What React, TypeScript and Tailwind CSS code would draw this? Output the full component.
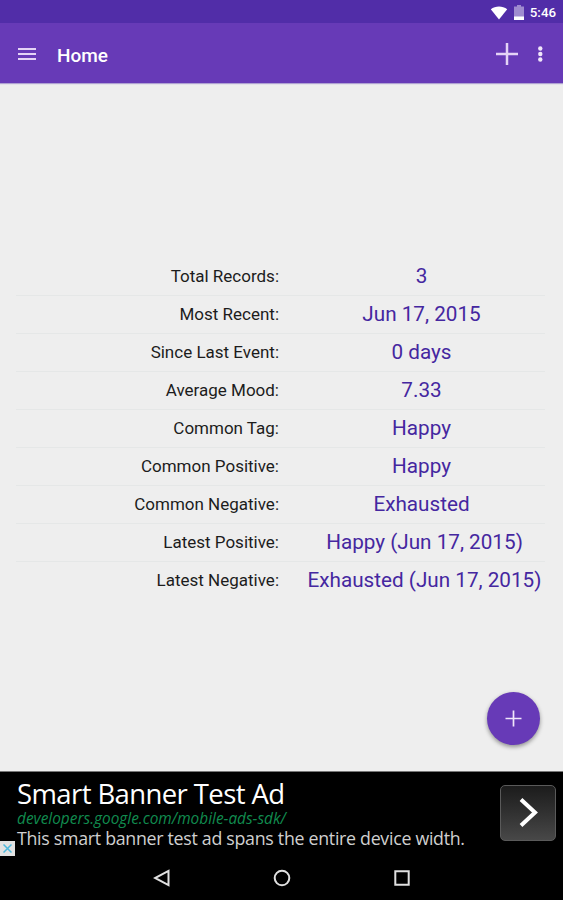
import React from 'react';

const records = [
  { label: 'Total Records:', value: '3' },
  { label: 'Most Recent:', value: 'Jun 17, 2015' },
  { label: 'Since Last Event:', value: '0 days' },
  { label: 'Average Mood:', value: '7.33' },
  { label: 'Common Tag:', value: 'Happy' },
  { label: 'Common Positive:', value: 'Happy' },
  { label: 'Common Negative:', value: 'Exhausted' },
  { label: 'Latest Positive:', value: 'Happy (Jun 17, 2015)', wide: true },
  { label: 'Latest Negative:', value: 'Exhausted (Jun 17, 2015)', wide: true },
];

const StatusBar = () => {
  return (
    <div className="flex h-[23px] items-center justify-end bg-[#512da8] pt-[2px] pr-[7px] text-white">
      <svg className="mr-[6px]" width="18" height="14" viewBox="0 0 18 14">
        <path d="M9 13.5 0.8 3.2C5.4-0.3 12.6-0.3 17.2 3.2Z" fill="#fff" />
      </svg>
      <svg className="mr-[6px]" width="10" height="15" viewBox="0 0 10 15">
        <path d="M3 0h4v1.5h3V15H0V1.5h3z" fill="#fff" fillOpacity="0.45" />
        <path d="M0 11.5h10V15H0z" fill="#fff" />
      </svg>
      <span className="text-[13.3px] leading-none font-medium">5:46</span>
    </div>
  );
};

const AppBar = () => {
  return (
    <header className="flex h-[60px] items-center bg-[#673ab7] pt-[2px] pr-[20px] pl-[18px] text-white shadow-[0_1px_1px_rgba(81,45,168,0.4)]">
      <button aria-label="Menu">
        <svg className="block" width="18" height="14" viewBox="0 0 18 14">
          <path d="M0 2h18M0 7h18M0 12h18" stroke="#e4d3f6" strokeWidth="2.2" />
        </svg>
      </button>
      <h1 className="ml-[21px] pt-[2px] text-[19px] leading-none font-medium">Home</h1>
      <button aria-label="Add" className="ml-auto">
        <svg className="block" width="24" height="24" viewBox="0 0 24 24">
          <path d="M12 1v22M1 12h22" stroke="#e4d3f6" strokeWidth="2.5" />
        </svg>
      </button>
      <button aria-label="More options" className="ml-[18px]">
        <svg className="block" width="6" height="18" viewBox="0 0 6 18">
          <circle cx="3.3" cy="3.5" r="2.2" fill="#f0e6fa" />
          <circle cx="3.3" cy="9" r="2.2" fill="#f0e6fa" />
          <circle cx="3.3" cy="14.5" r="2.2" fill="#f0e6fa" />
        </svg>
      </button>
    </header>
  );
};

const Summary = () => {
  return (
    <div className="mr-[18px] ml-[16px] mt-[3px]">
      {records.map((record) => (
        <div key={record.label} className="flex h-[38px] items-center border-b border-[#e5e7e7] pt-[2px] last:border-transparent">
          <div className="w-[263px] text-right text-[17px] text-[#1c1c1c]">{record.label}</div>
          <div
            className={`flex-1 text-center text-[20.7px] whitespace-nowrap text-[#4527a0] ${record.wide ? 'ml-[25px]' : 'ml-[19px]'}`}
          >
            {record.value}
          </div>
        </div>
      ))}
    </div>
  );
};

const AdBanner = () => {
  return (
    <div className="relative flex h-[85px] border-t border-[#777] bg-black pl-[17px] font-['Open_Sans',sans-serif] whitespace-nowrap">
      <div className="pt-[6px]">
        <div className="text-[27.5px] leading-[32px] tracking-[-0.6px] text-white">Smart Banner Test Ad</div>
        <div className="text-[15.4px] leading-[18px] text-[#118c4f] italic">developers.google.com/mobile-ads-sdk/</div>
        <div className="text-[17.8px] leading-[20px] tracking-[-0.29px] text-[#d0d0d0]">
          This smart banner test ad spans the entire device width.
        </div>
      </div>
      <button
        aria-label="Open ad"
        className="mt-[13px] mr-[7px] ml-auto flex size-[56px] items-center justify-center rounded-[5px] border border-[#5a5a5a] bg-linear-to-b from-[#1c1c1c] to-[#484848]"
      >
        <svg width="20" height="32" viewBox="0 0 20 32">
          <path d="M3 2.5 17 15.5 3 28.5" fill="none" stroke="#fff" strokeWidth="4" />
        </svg>
      </button>
      <div className="absolute top-[69px] left-0 flex h-[15px] w-[15px] items-center justify-center bg-[#e2e2e2]">
        <svg width="9" height="9" viewBox="0 0 9 9">
          <path d="M0.5 0.5 8.5 8.5M8.5 0.5 0.5 8.5" stroke="#4db8dc" strokeWidth="1.5" />
        </svg>
      </div>
    </div>
  );
};

const NavBar = () => {
  return (
    <nav className="flex flex-1 items-center justify-center gap-[102px] bg-black">
      <svg width="18" height="18" viewBox="0 0 18 18">
        <path d="M15.5 1.8v14.4L2 9z" fill="none" stroke="#e0e0e0" strokeWidth="2" />
      </svg>
      <svg width="18" height="18" viewBox="0 0 18 18">
        <circle cx="9" cy="9" r="7.3" fill="none" stroke="#e0e0e0" strokeWidth="2" />
      </svg>
      <svg width="18" height="18" viewBox="0 0 18 18">
        <path d="M2.3 2.3h13.4v13.4H2.3z" fill="none" stroke="#e0e0e0" strokeWidth="2" />
      </svg>
    </nav>
  );
};

const App = () => {
  return (
    <div className="flex h-[900px] w-full flex-col overflow-hidden bg-[#eeeeee] font-['Roboto',sans-serif]">
      <StatusBar />
      <AppBar />
      <main className="relative flex h-[688px] flex-col justify-center">
        <Summary />
        <button
          aria-label="New record"
          className="absolute right-[23px] bottom-[26px] flex size-[53px] items-center justify-center rounded-full bg-[#673ab7] shadow-[0_2px_4px_rgba(0,0,0,0.4)]"
        >
          <svg width="18" height="18" viewBox="0 0 18 18">
            <path d="M8.5 0.5v16M0.5 8.5h16" stroke="#f0e6fa" strokeWidth="1.7" />
          </svg>
        </button>
      </main>
      <AdBanner />
      <NavBar />
    </div>
  );
};

export default App;
